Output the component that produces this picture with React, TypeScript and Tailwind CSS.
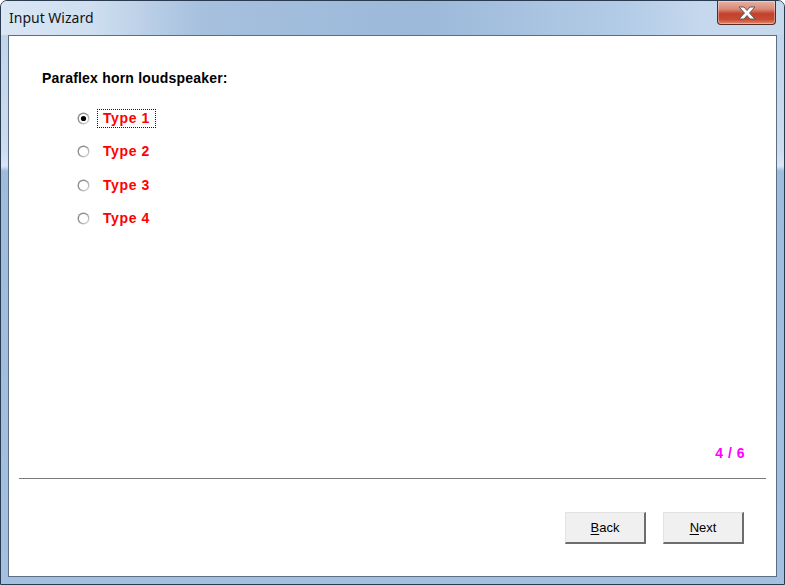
import React from "react";

const options = ["Type 1", "Type 2", "Type 3", "Type 4"];

function Radio({ checked }: { checked: boolean }) {
  return (
    <svg width="13" height="13" viewBox="0 0 13 13" className="shrink-0">
      <defs>
        <linearGradient id="rg" x1="0" y1="0" x2="1" y2="1">
          <stop offset="0" stopColor="#808080" />
          <stop offset="0.5" stopColor="#9a9a9a" />
          <stop offset="1" stopColor="#ececec" />
        </linearGradient>
      </defs>
      <circle cx="6.5" cy="6.5" r="6" fill="url(#rg)" />
      <circle cx="6.5" cy="6.5" r="4.6" fill="#ffffff" />
      {checked && <circle cx="6.5" cy="6.5" r="2.6" fill="#000000" />}
    </svg>
  );
}

function CloseButton() {
  return (
    <div className="absolute right-[8px] top-0 w-[59px] h-[24px] rounded-b-[4px] border border-t-0 border-[#5a2a22] bg-[linear-gradient(to_bottom,#e8b1a4_0%,#d98a77_35%,#c4412b_55%,#c84a33_80%,#dd8a6f_100%)] flex items-center justify-center shadow-[inset_0_0_0_1px_rgba(255,255,255,0.35)]">
      <svg width="22" height="16" viewBox="0 0 22 16">
        <path
          d="M3 2 H8 L11 5.5 L14 2 H19 L13.5 8 L19 14 H14 L11 10.5 L8 14 H3 L8.5 8 Z"
          fill="#ffffff"
          stroke="#5b5b5b"
          strokeWidth="1"
          strokeLinejoin="round"
        />
      </svg>
    </div>
  );
}

function WinButton({ label }: { label: string }) {
  return (
    <button
      type="button"
      className="w-[81px] h-[32px] bg-[#f0f0f0] border-t border-l border-t-[#e3e3e3] border-l-[#e3e3e3] border-b-2 border-r-2 border-b-[#6d6d6d] border-r-[#6d6d6d] text-[13px] text-black font-['Liberation_Sans',Arial,sans-serif]"
    >
      <span className="underline underline-offset-2">{label[0]}</span>
      {label.slice(1)}
    </button>
  );
}

export default function App() {
  return (
    <div className="w-[785px] h-[585px] relative overflow-hidden rounded-t-[7px] border border-[#2b3b4f] bg-[linear-gradient(to_bottom,#bcd2ea_0px,#cddcee_150px,#dbe6f3_165px,#9ebcdd_170px,#a3c0e0_100%)] flex flex-col">
      {/* title bar */}
      <div className="h-[34px] shrink-0 relative bg-[linear-gradient(to_right,#d9e6f4_0px,#cfdff0_90px,#a6c0de_200px,#9cb9da_420px,#b2cbe6_620px,#c5d8ed_700px,#c6d8ec_785px)]">
        <span className="absolute left-[8px] top-[8px] text-[14px] leading-[18px] text-[#141414] font-['Noto_Sans',sans-serif]">
          Input Wizard
        </span>
        <CloseButton />
      </div>

      {/* client area */}
      <div className="flex-1 ml-[7px] mr-[7px] mb-[7px] border border-[#5c6e84] bg-white flex flex-col font-['Liberation_Sans',Arial,sans-serif]">
        <div className="pl-[33px] pt-[34px] text-[14px] tracking-[0.2px] font-bold leading-[16px] text-black">
          Paraflex horn loudspeaker:
        </div>

        <div className="flex flex-col pl-[68px] mt-[16px]">
          {options.map((o, i) => (
            <div key={o} className="h-[33.3px] flex items-center">
              <Radio checked={i === 0} />
              <span
                className={`ml-[7px] px-[5px] leading-[17px] text-[14px] tracking-[0.6px] font-bold text-[#ff0000] border border-dotted ${
                  i === 0 ? "border-[#1a1a1a]" : "border-transparent"
                }`}
              >
                {o}
              </span>
            </div>
          ))}
        </div>

        <div className="flex-1" />

        <div className="flex justify-end pr-[31px] text-[14px] tracking-[0.5px] font-bold leading-[16px] text-[#ff00ff]">
          4 / 6
        </div>

        <div className="mx-[10px] mt-[17px] h-px bg-[#7a7a7a]" />

        <div className="flex justify-end gap-[17px] pr-[32px] mt-[33px] mb-[32px]">
          <WinButton label="Back" />
          <WinButton label="Next" />
        </div>
      </div>
    </div>
  );
}
